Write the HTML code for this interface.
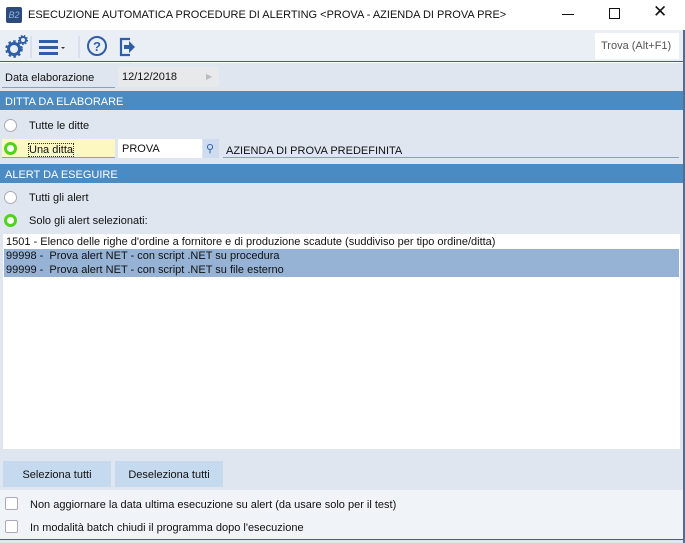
<!DOCTYPE html>
<html><head><meta charset="utf-8"><style>
*{margin:0;padding:0;box-sizing:border-box}
body{width:685px;height:543px;overflow:hidden;background:#fff;font-family:"Liberation Sans",sans-serif;font-size:11px;color:#111;position:relative}
.a{position:absolute}
.hdr{background:#4b8bc3;color:#fff;height:19px;left:0;width:683px;padding:5px 0 0 5px;font-size:11px}
.rad{width:13px;height:13px;border-radius:50%;border:1px solid #aab;background:#fff}
.radon{width:13px;height:13px;border-radius:50%;border:3px solid #4fd41c;background:#fff}
.cb{width:13px;height:13px;border:1px solid #aab;background:#fff;border-radius:2px}
.row{left:4px;width:675px;height:14px;padding:1px 0 0 2px}
.btn{background:#c5d9ef;height:26px;top:461px;padding-top:8px;text-align:center}
</style></head><body>
<div class="a" style="left:6px;top:7px;width:16px;height:16px;background:#2c4b7a;border-radius:2px;color:#8fb5e8;font-size:9px;font-style:italic;text-align:center;line-height:16px">B2</div>
<div class="a" style="left:28px;top:9px;font-size:11px">ESECUZIONE AUTOMATICA PROCEDURE DI ALERTING &lt;PROVA - AZIENDA DI PROVA PRE&gt;</div>
<div class="a" style="left:562px;top:14px;width:12px;height:1px;background:#111"></div>
<div class="a" style="left:609px;top:8px;width:11px;height:11px;border:1px solid #111"></div>
<div class="a" style="left:653px;top:2px;font-size:17px">✕</div>
<div class="a" style="left:0;top:30px;width:685px;height:32px;background:#eaeff6;border-bottom:1px solid #4a5a7a"></div>
<svg class="a" style="left:4px;top:34px" width="150" height="26">
<circle cx="10" cy="15" r="5.5" fill="none" stroke="#2f5ea8" stroke-width="3"/>
<circle cx="10" cy="15" r="7.5" fill="none" stroke="#2f5ea8" stroke-width="2.5" stroke-dasharray="2.5 2.4"/>
<circle cx="10" cy="15" r="2" fill="#eaeff6"/>
<circle cx="19" cy="6" r="3" fill="none" stroke="#2f5ea8" stroke-width="2"/>
<circle cx="19" cy="6" r="4.3" fill="none" stroke="#2f5ea8" stroke-width="1.5" stroke-dasharray="1.5 1.5"/>
<line x1="27" y1="2" x2="27" y2="24" stroke="#c8d0dc"/>
<rect x="35" y="6" width="19" height="3" fill="#2f5ea8"/><rect x="35" y="12" width="19" height="3" fill="#2f5ea8"/><rect x="35" y="18" width="19" height="3" fill="#2f5ea8"/>
<path d="M57 13h4l-2 2z" fill="#333"/>
<line x1="75" y1="2" x2="75" y2="24" stroke="#c8d0dc"/>
<circle cx="93" cy="12" r="9" fill="none" stroke="#2f5ea8" stroke-width="2"/>
<text x="89" y="17" font-size="13" font-weight="bold" fill="#2f5ea8" font-family="Liberation Sans">?</text>
<path d="M126 5h-9v16h9" fill="none" stroke="#2f5ea8" stroke-width="2.2"/>
<path d="M120 11h5v-4l6 6-6 6v-4h-5z" fill="#2f5ea8"/>
</svg>
<div class="a" style="left:595px;top:33px;width:84px;height:26px;background:#fff;padding:7px 0 0 6px;color:#555;font-size:11px">Trova (Alt+F1)</div>
<div class="a" style="left:0;top:63px;width:685px;height:480px;background:#dfe6f0"></div>
<div class="a" style="left:2px;top:67px;width:113px;height:21px;border-bottom:1px solid #8aa0c0;padding:5px 0 0 3px">Data elaborazione</div>
<div class="a" style="left:118px;top:67px;width:101px;height:20px;background:#e8e9eb;padding:4px 0 0 4px">12/12/2018<span style="position:absolute;left:88px;color:#bbb;font-size:8px;top:5px">▶</span></div>
<div class="a hdr" style="top:91px">DITTA DA ELABORARE</div>
<div class="a rad" style="left:4px;top:119px"></div>
<div class="a" style="left:29px;top:120px">Tutte le ditte</div>
<div class="a" style="left:2px;top:139px;width:113px;height:19px;background:#fdf7c2;border-bottom:1px solid #8aa0c0"></div>
<div class="a radon" style="left:4px;top:142px"></div>
<div class="a" style="left:29px;top:144px;outline:1px dotted #333">Una ditta</div>
<div class="a" style="left:118px;top:139px;width:84px;height:19px;background:#fff;padding:4px 0 0 4px">PROVA</div>
<div class="a" style="left:203px;top:139px;width:16px;height:19px;background:#cfdcef;color:#2f5ea8;padding:3px 0 0 3px;font-size:11px">⚲</div>
<div class="a" style="left:223px;top:140px;width:456px;height:18px;border-bottom:1px solid #8aa0c0;padding:5px 0 0 3px">AZIENDA DI PROVA PREDEFINITA</div>
<div class="a hdr" style="top:164px">ALERT DA ESEGUIRE</div>
<div class="a rad" style="left:4px;top:191px"></div>
<div class="a" style="left:29px;top:192px">Tutti gli alert</div>
<div class="a radon" style="left:4px;top:214px"></div>
<div class="a" style="left:29px;top:215px">Solo gli alert selezionati:</div>
<div class="a" style="left:3px;top:234px;width:677px;height:215px;background:#fff"></div>
<div class="a row" style="top:235px">1501 - Elenco delle righe d'ordine a fornitore e di produzione scadute (suddiviso per tipo ordine/ditta)</div>
<div class="a row" style="top:249px;background:#96b3d6">99998 -&nbsp; Prova alert NET - con script .NET su procedura</div>
<div class="a row" style="top:263px;background:#96b3d6">99999 -&nbsp; Prova alert NET - con script .NET su file esterno</div>
<div class="a btn" style="left:3px;width:108px">Seleziona tutti</div>
<div class="a btn" style="left:115px;width:108px">Deseleziona tutti</div>
<div class="a" style="left:0;top:490px;width:683px;height:50px;background:#f0f3f8;border-bottom:1px solid #4a5a7a"></div>
<div class="a cb" style="left:5px;top:497px"></div>
<div class="a" style="left:30px;top:499px">Non aggiornare la data ultima esecuzione su alert (da usare solo per il test)</div>
<div class="a cb" style="left:5px;top:520px"></div>
<div class="a" style="left:30px;top:522px">In modalità batch chiudi il programma dopo l'esecuzione</div>
<div class="a" style="left:683px;top:30px;width:2px;height:513px;background:#5a6a8a"></div>
</body></html>
